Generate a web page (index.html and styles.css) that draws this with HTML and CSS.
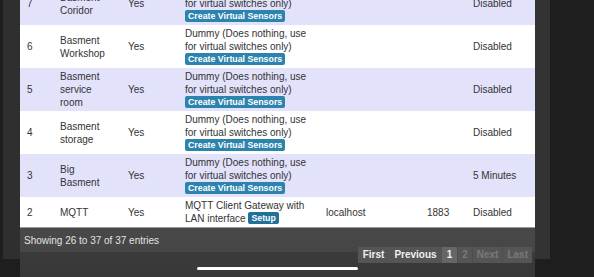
FILE: index.html
```html
<!DOCTYPE html>
<html lang="en">
<head>
    <meta charset="UTF-8">
    <meta name="viewport" content="width=device-width, initial-scale=1.0">
    <title>Hardware</title>
    <link rel="stylesheet" href="styles.css">
</head>
<body>
    <div class="page">
        <div class="table-wrap">
            <table class="hw-table">
                <colgroup>
                    <col class="c-id">
                    <col class="c-name">
                    <col class="c-enabled">
                    <col class="c-type">
                    <col class="c-address">
                    <col class="c-port">
                    <col class="c-timeout">
                </colgroup>
                <tbody>
                    <tr class="odd">
                        <td>7</td>
                        <td>Basment Coridor</td>
                        <td>Yes</td>
                        <td>Dummy (Does nothing, use for virtual switches only) <span class="btn-small">Create Virtual Sensors</span></td>
                        <td></td>
                        <td></td>
                        <td>Disabled</td>
                    </tr>
                    <tr>
                        <td>6</td>
                        <td>Basment Workshop</td>
                        <td>Yes</td>
                        <td>Dummy (Does nothing, use for virtual switches only) <span class="btn-small">Create Virtual Sensors</span></td>
                        <td></td>
                        <td></td>
                        <td>Disabled</td>
                    </tr>
                    <tr class="odd">
                        <td>5</td>
                        <td>Basment service room</td>
                        <td>Yes</td>
                        <td>Dummy (Does nothing, use for virtual switches only) <span class="btn-small">Create Virtual Sensors</span></td>
                        <td></td>
                        <td></td>
                        <td>Disabled</td>
                    </tr>
                    <tr>
                        <td>4</td>
                        <td>Basment storage</td>
                        <td>Yes</td>
                        <td>Dummy (Does nothing, use for virtual switches only) <span class="btn-small">Create Virtual Sensors</span></td>
                        <td></td>
                        <td></td>
                        <td>Disabled</td>
                    </tr>
                    <tr class="odd">
                        <td>3</td>
                        <td>Big Basment</td>
                        <td>Yes</td>
                        <td>Dummy (Does nothing, use for virtual switches only) <span class="btn-small">Create Virtual Sensors</span></td>
                        <td></td>
                        <td></td>
                        <td>5 Minutes</td>
                    </tr>
                    <tr class="last">
                        <td>2</td>
                        <td>MQTT</td>
                        <td>Yes</td>
                        <td>MQTT Client Gateway with LAN interface <span class="btn-small btn-setup">Setup</span></td>
                        <td>localhost</td>
                        <td>1883</td>
                        <td>Disabled</td>
                    </tr>
                </tbody>
            </table>

            <!-- table footer: info + paging -->
            <div class="table-footer">
                <div class="table-info">Showing 26 to 37 of 37 entries</div>
                <div class="paginate">
                    <span class="page-btn">First</span>
                    <span class="page-btn">Previous</span>
                    <span class="page-btn current">1</span>
                    <span class="page-btn disabled">2</span>
                    <span class="page-btn disabled">Next</span>
                    <span class="page-btn disabled">Last</span>
                </div>
            </div>
        </div>
    </div>

    <div class="home-bar"></div>
</body>
</html>
```

FILE: styles.css
```css
html, body {
    height: 100%;
}
body {
    margin: 0;
    overflow: hidden;
    background: #1e1e1e;
    font-family: "Liberation Sans", Arial, sans-serif;
}
.page {
    margin-left: 3px;
    width: 515px;
    height: 100%;
    padding: 0 15px 0 17px;
    background: #2f2f2f;
    border-right: 0;
    box-shadow: inset -15px 0 0 #333;
}
.table-wrap {
    margin-top: -18px;
    width: 515px;
}
.hw-table {
    width: 515px;
    table-layout: fixed;
    border-collapse: collapse;
    font-size: 10px;
    line-height: 13px;
    color: #333;
    background: #fff;
}
.c-id { width: 33px; }
.c-name { width: 68px; }
.c-enabled { width: 57px; }
.c-type { width: 141px; }
.c-address { width: 101px; }
.c-port { width: 46px; }
.c-timeout { width: 69px; }

.hw-table td {
    padding: 2px 7px;
    vertical-align: middle;
}
.hw-table tr.odd td {
    background: #e2e2fb;
}
.hw-table tr.last td {
    border-bottom: 1px solid #9a9a9a;
}
.btn-small {
    display: inline-block;
    vertical-align: top;
    height: 12px;
    line-height: 12px;
    padding: 0 3px;
    font-size: 8.8px;
    font-weight: bold;
    color: #fff;
    background: #2c83ad;
    border-radius: 2px;
}
.btn-setup {
    background: #21709a;
}

.table-footer {
    display: flex;
    justify-content: space-between;
    align-items: flex-start;
    height: 60px;
    padding: 0 3px 0 4px;
    background: linear-gradient(to bottom, #484848 0, #464646 24px, #3b3b3b 24px, #363636 100%);
}
.table-info {
    padding-top: 7px;
    font-size: 10px;
    line-height: 12px;
    color: #e2e2e2;
}
.paginate {
    display: flex;
    margin-top: 19px;
    height: 16px;
    background: #555;
    font-size: 10px;
    font-weight: bold;
    line-height: 16px;
    color: #f0f0f0;
}
.page-btn {
    padding: 0 5px;
}
.page-btn.current {
    background: #666;
}
.page-btn.disabled {
    color: #7a7a7a;
    border-left: 1px solid #4e4e4e;
    padding: 0 4px;
}

/* iOS home indicator, lies over the page */
.home-bar {
    position: fixed;
    left: 197px;
    top: 267px;
    width: 161px;
    height: 3px;
    border-radius: 2px;
    background: #fff;
}
```
